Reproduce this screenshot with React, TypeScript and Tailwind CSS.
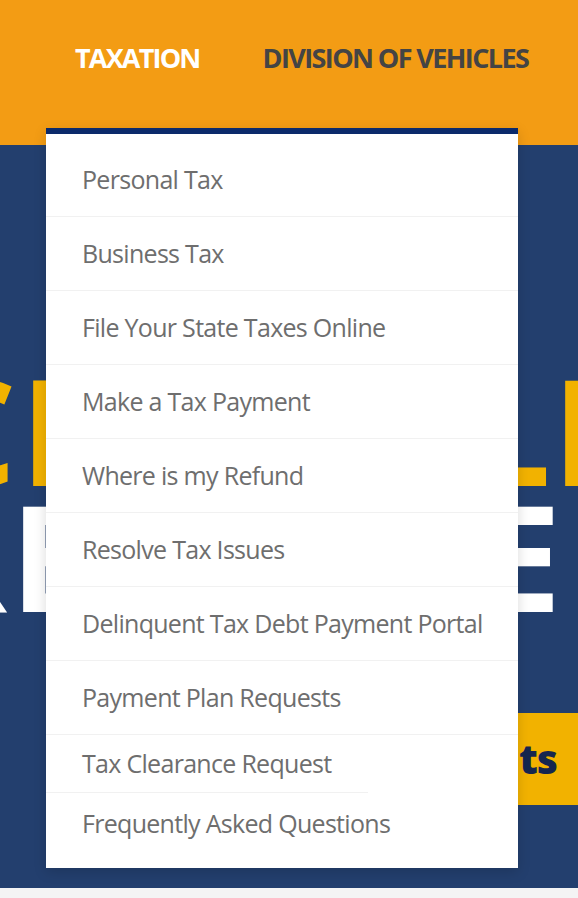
import React from 'react';

const items = [
  'Personal Tax',
  'Business Tax',
  'File Your State Taxes Online',
  'Make a Tax Payment',
  'Where is my Refund',
  'Resolve Tax Issues',
  'Delinquent Tax Debt Payment Portal',
  'Payment Plan Requests',
];

const App: React.FC = () => {
  return (
    <div className="relative w-[578px] h-[898px] overflow-hidden bg-[#f4f4f4] font-['Open_Sans',sans-serif]">
      {/* Top nav */}
      <header className="h-[145px] bg-[#f39c14] flex items-start pt-[40px] pl-[75px] gap-[63px]">
        <a className="text-[27px] leading-[36px] font-bold tracking-[-1.8px] text-white">TAXATION</a>
        <a className="text-[27px] leading-[36px] font-bold tracking-[-1.6px] text-[#444444] whitespace-nowrap">
          DIVISION OF VEHICLES
        </a>
      </header>

      {/* Hero */}
      <section className="h-[743px] bg-[#233f6e] overflow-hidden font-bold">
        <div className="h-[221px]" />
        <div className="flex text-[147px] leading-[126px] text-[#f2b200] whitespace-nowrap">
          <span className="shrink-0 ml-[-77px] w-[97px]">C</span>
          <span className="shrink-0 w-[448px]">L</span>
          <span className="shrink-0 w-[84px]">L</span>
          <span className="shrink-0">E</span>
        </div>
        <div className="flex text-[147px] leading-[126px] text-white whitespace-nowrap">
          <span className="shrink-0 ml-[-90px] w-[100px]">R</span>
          <span className="shrink-0 w-[469px]">E</span>
          <span className="shrink-0">E</span>
        </div>
        <div className="h-[95px]" />
        <div className="flex">
          <button className="shrink-0 ml-[400px] w-[220px] h-[92px] bg-[#f2b200] text-[#16264f] text-[41px] font-extrabold text-right pr-[63px] tracking-[-1px]">
            Results
          </button>
        </div>
      </section>

      {/* Dropdown */}
      <div className="absolute left-[46px] top-[128px] w-[472px] bg-white border-t-[6px] border-[#0b2a6b] pt-[9px] pb-[14px] shadow-[0_4px_12px_rgba(0,0,0,0.15)]">
        <ul className="text-[25px] tracking-[-0.7px] text-[#6e6e6e]">
          {items.map((label) => (
            <li key={label} className="h-[74px] flex items-center pl-[36px] border-b border-[#f1f1f1] whitespace-nowrap">
              {label}
            </li>
          ))}
          <li className="h-[57px] flex items-center pl-[36px]">Tax Clearance Request</li>
          <li className="w-[322px] h-px bg-[#f1f1f1]" />
          <li className="h-[61px] flex items-center pl-[36px]">Frequently Asked Questions</li>
        </ul>
      </div>
    </div>
  );
};

export default App;
